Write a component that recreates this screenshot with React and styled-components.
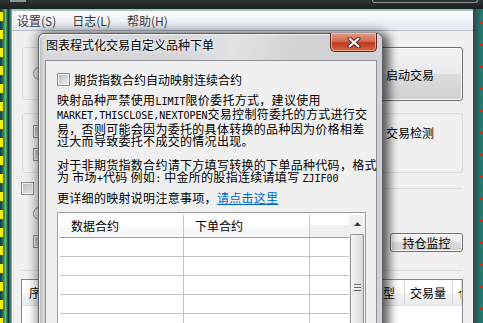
import styled, { createGlobalStyle } from 'styled-components';

const cjk = `"Noto Sans CJK SC", "Microsoft YaHei", sans-serif`;

const GlobalStyle = createGlobalStyle`
  html, body { margin: 0; padding: 0; }
  body {
    width: 483px;
    height: 323px;
    overflow: hidden;
    background: #1f2626;
    font-family: ${cjk};
    font-size: 12px;
    color: #000;
  }
`;

const Screen = styled.div`
  position: relative;
  width: 483px;
  height: 323px;
  overflow: hidden;
  display: flex;
  flex-direction: column;
`;

const TopStrip = styled.div`
  height: 9px;
  flex: none;
  display: flex;
  align-items: flex-start;
  padding-left: 10px;
  background: linear-gradient(#2f3535, #1a1f1f);
`;

const TopLabel = styled.span`
  width: 16px;
  height: 2px;
  background: #b8c0c0;
  opacity: 0.7;
`;

const BehindWindow = styled.span`
  margin-left: auto;
  margin-right: 5px;
  width: 104px;
  height: 2px;
  border: 1px solid #8a9494;
  border-top: none;
  border-radius: 0 0 3px 3px;
`;

const Desk = styled.div`
  flex: 1;
  display: flex;
  min-height: 0;
`;

const LeftStrip = styled.div`
  width: 9px;
  flex: none;
  background:
    repeating-linear-gradient(to bottom, transparent 0 3px, #f4ee10 3px 12px, transparent 12px 18px) left / 3px 100% no-repeat,
    linear-gradient(to right, #0f3c35 0, #2c8a72 45%, #7fc050 60%, #1b5a4d 85%, #0c2a26 100%);
`;

const MainWindow = styled.div`
  flex: 1;
  min-width: 0;
  display: flex;
  flex-direction: column;
  padding: 2px 0 0 3px;
  background: linear-gradient(to right, #24524c, #4d8d86 2px, #9fc2c0 3px);
`;

const MenuBar = styled.div`
  height: 19px;
  flex: none;
  display: flex;
  align-items: center;
  gap: 16px;
  padding-left: 5px;
  background: linear-gradient(#fbfcfe, #e2e7f0);
  border-bottom: 1px solid #b9c0ca;
  color: #3c3c3c;
  line-height: 19px;
`;

const Client = styled.div`
  flex: 1;
  min-width: 0;
  overflow: hidden;
  display: flex;
  flex-direction: column;
  padding: 10px 10px 0 10px;
  background: #f0f0f0;
`;

const RightStrip = styled.div`
  width: 10px;
  flex: none;
  box-sizing: border-box;
  border-left: 2px solid #3a4646;
  background:
    repeating-linear-gradient(to bottom, transparent 0 13px, #d42a1c 13px 15px, transparent 15px 22px) right / 3px 100% no-repeat,
    linear-gradient(to right, #1d5e58, #2a7c73);
`;

const TopRow = styled.div`
  display: flex;
  align-items: flex-start;
`;

const Group = styled.fieldset`
  box-sizing: border-box;
  margin: 0;
  margin-top: ${p => p.$top || '0px'};
  padding: 5px 12px 0 10px;
  height: ${p => p.$h};
  flex: ${p => (p.$grow ? 1 : 'none')};
  border: 1px solid #d5dfe5;
  border-radius: 3px;
  display: flex;
  min-width: 0;
`;

const Legend = styled.legend`
  margin-left: 5px;
  padding: 0 2px;
  line-height: 13px;
`;

const OptionCol = styled.div`
  flex: 1;
  display: flex;
  flex-direction: column;
  gap: ${p => p.$gap || '10px'};
  padding-top: ${p => p.$pad || '0px'};
`;

const Option = styled.label`
  display: flex;
  align-items: center;
  gap: 4px;
  line-height: 13px;
  white-space: nowrap;
`;

const Check = styled.span`
  box-sizing: border-box;
  width: 13px;
  height: 13px;
  flex: none;
  border: 1px solid #8e8f8f;
  background: linear-gradient(135deg, #b4b9bf, #f2f2f2);
  box-shadow: inset 0 0 0 1px #f7f7f7;
`;

const Radio = styled(Check)`
  border-radius: 50%;
  background: radial-gradient(circle at 40% 40%, #f6f6f6, #c3c6ca);
`;

const BigButton = styled.button`
  box-sizing: border-box;
  margin: 6px 0 0 10px;
  width: 106px;
  height: 54px;
  flex: none;
  font: 12px ${cjk};
  color: #000;
  border: 1px solid #707070;
  border-radius: 3px;
  background: linear-gradient(#f2f2f2 0, #ebebeb 50%, #dddddd 50%, #cfcfcf 100%);
  box-shadow: inset 0 0 0 1px #fcfcfc;
`;

const SmallButton = styled(BigButton)`
  margin: 38px 0 0 0;
  width: 73px;
  height: 19px;
  padding: 0;
  line-height: 17px;
`;

const RightOption = styled(Option)`
  width: 81px;
  flex: none;
  align-self: flex-start;
  margin-top: 1px;
`;

const SectionHead = styled.div`
  margin: 9px 1px 0 -1px;
  display: flex;
  align-items: center;
  line-height: 13px;
`;

const Rule = styled.div`
  flex: 1;
  border-top: 1px solid #d5dfe5;
  margin-left: 60px;
`;

const SectionBody = styled.div`
  height: 75px;
  display: flex;
  align-items: flex-start;
  padding-left: 11px;
`;

const Separator = styled.div`
  margin: 0 1px 0 -1px;
  border-top: 1px solid #d5dfe5;
`;

const ListBox = styled.div`
  margin: 8px 0 0 -1px;
  flex: 1;
  border: 1px solid #828790;
  border-bottom: none;
  background: #fff;
  display: flex;
  flex-direction: column;
`;

const ListHead = styled.div`
  display: flex;
  height: 25px;
  border-bottom: 1px solid #e2e3e4;
  background: linear-gradient(#ffffff 50%, #f3f4f5 50%, #eaebec);
`;

const HeadCell = styled.div`
  box-sizing: border-box;
  width: ${p => p.$w};
  flex: ${p => (p.$w ? 'none' : 1)};
  padding-left: ${p => p.$pad || '6px'};
  line-height: 25px;
  border-right: 1px solid #d5d5d5;
  white-space: nowrap;
  overflow: hidden;
`;

/* dialog window */

const Dialog = styled.div`
  position: absolute;
  left: 38px;
  top: 33px;
  width: 345px;
  height: 300px;
  box-sizing: border-box;
  display: flex;
  flex-direction: column;
  padding: 0 5px 0 6px;
  border: 1px solid #5e6266;
  border-bottom: none;
  border-radius: 6px 6px 0 0;
  background:
    linear-gradient(100deg, rgba(255,255,255,0) 35%, rgba(255,255,255,0.35) 50%, rgba(255,255,255,0) 65%),
    linear-gradient(to right, #9c9fa3 0, #c9cbce 2px, #d6d8da 6px, #cfd1d4 100%);
  box-shadow: inset 1px 1px 0 #eef0f2, 0 0 10px 3px rgba(0,0,0,0.35), 7px 2px 10px rgba(0,0,0,0.45);
`;

const TitleBar = styled.div`
  height: 26px;
  flex: none;
  display: flex;
  align-items: flex-start;
  padding-left: 1px;
`;

const Title = styled.div`
  line-height: 21px;
  color: #000;
  text-shadow: 0 0 6px #fff, 0 0 3px #fff;
`;

const CloseButton = styled.div`
  margin-left: auto;
  margin-top: -1px;
  width: 47px;
  height: 19px;
  box-sizing: border-box;
  border: 1px solid #5f2319;
  border-top: none;
  border-radius: 0 0 5px 5px;
  background: linear-gradient(#e49a86 0, #d56a52 45%, #c0391f 55%, #cf6a43 100%);
  box-shadow: inset 0 0 0 1px rgba(255, 210, 190, 0.6);
  display: flex;
  align-items: center;
  justify-content: center;
`;

const DialogClient = styled.div`
  flex: 1;
  background: #f0f0f0;
  border: 1px solid #8c9096;
  border-bottom: none;
  padding: 12px 0 0 11px;
  display: flex;
  flex-direction: column;
`;

const Para = styled.div`
  margin-top: ${p => p.$top};
  line-height: ${p => p.$lh || '12.3px'};
  letter-spacing: 0.3px;
  white-space: nowrap;
`;

const Latin = styled.span`
  font-family: "DejaVu Sans Mono", "Liberation Mono", monospace;
  font-size: 10px;
  letter-spacing: 0;
`;

const Link = styled.a`
  color: #0066cc;
  text-decoration: underline;
`;

const Grid = styled.div`
  margin-top: 8px;
  width: 309px;
  flex: 1;
  box-sizing: border-box;
  border: 1px solid #9a9fa6;
  border-bottom: none;
  padding: 2px 0 0 2px;
  background: #fff;
  display: flex;
`;

const GridBody = styled.div`
  flex: 1;
  display: flex;
  flex-direction: column;
`;

const GridRow = styled.div`
  display: flex;
  height: ${p => p.$head ? '22px' : '18px'};
  flex: none;
  border-bottom: 1px solid ${p => p.$head ? '#a0a0a0' : '#c4c4c4'};
  background: ${p => p.$head ? 'linear-gradient(#ffffff 55%, #f6f7f8 55%)' : '#fff'};
`;

const GridCell = styled.div`
  box-sizing: border-box;
  width: ${p => p.$w};
  flex: ${p => (p.$w ? 'none' : 1)};
  padding-left: 11px;
  line-height: 22px;
  border-right: ${p => p.$sep ? '1px solid #c4c4c4' : 'none'};
  background: ${p => p.$filler ? 'linear-gradient(#ffffff 45%, #eef0f1 45%)' : 'transparent'};
`;

const ScrollBar = styled.div`
  width: 16px;
  flex: none;
  display: flex;
  flex-direction: column;
  background: #f0f0f0;
`;

const ArrowButton = styled.div`
  height: 18px;
  display: flex;
  align-items: center;
  justify-content: center;
`;

const Thumb = styled.div`
  flex: 1;
  margin: 1px 1px 0 1px;
  border: 1px solid #979797;
  border-bottom: none;
  border-radius: 2px 2px 0 0;
  background: linear-gradient(to right, #f3f3f3, #e4e4e4 60%, #d6d6d6);
  display: flex;
  justify-content: center;
  padding-top: 49px;
`;

const Grip = styled.div`
  width: 7px;
  height: 7px;
  background: repeating-linear-gradient(#6a6a6a 0 1px, #f4f4f4 1px 2px, transparent 2px 3px);
`;

const rows = [0, 1, 2, 3, 4];

export default function App() {
  return (
    <>
      <GlobalStyle />
      <Screen>
        <TopStrip>
          <TopLabel />
          <BehindWindow />
        </TopStrip>
        <Desk>
          <LeftStrip />
          <MainWindow>
            <MenuBar>
              <span>设置(S)</span>
              <span>日志(L)</span>
              <span>帮助(H)</span>
            </MenuBar>
            <Client>
              <TopRow>
                <Group $grow $h="59px">
                  <Legend>信</Legend>
                  <OptionCol $pad="8px">
                    <Option><Radio /></Option>
                  </OptionCol>
                </Group>
                <BigButton>启动交易</BigButton>
              </TopRow>

              <Group $top="6px" $h="66px">
                <Legend>运</Legend>
                <OptionCol $gap="10px">
                  <Option><Check /></Option>
                  <Option><Check /></Option>
                </OptionCol>
                <RightOption><Check />交易检测</RightOption>
              </Group>

              <SectionHead>
                <Check />
                <Rule />
              </SectionHead>
              <SectionBody>
                <OptionCol $pad="12px" $gap="15px">
                  <Option><Radio /></Option>
                  <Option><Check /></Option>
                </OptionCol>
                <SmallButton>持仓监控</SmallButton>
              </SectionBody>
              <Separator />

              <ListBox>
                <ListHead>
                  <HeadCell $w="78px" $pad="7px">序号</HeadCell>
                  <HeadCell $w="120px" />
                  <HeadCell $w="60px" />
                  <HeadCell $w="61px" />
                  <HeadCell $w="64px">委托类型</HeadCell>
                  <HeadCell $w="48px" $pad="5px">交易量</HeadCell>
                  <HeadCell $pad="5px">仓位</HeadCell>
                </ListHead>
              </ListBox>
            </Client>
          </MainWindow>
          <RightStrip />
        </Desk>

        <Dialog>
          <TitleBar>
            <Title>图表程式化交易自定义品种下单</Title>
            <CloseButton>
              <svg width="14" height="11" viewBox="0 0 14 11">
                <path d="M2.5 1.5 L11.5 9.5 M11.5 1.5 L2.5 9.5" stroke="#4a2a2a" strokeWidth="4" strokeLinecap="round" />
                <path d="M2.5 1.5 L11.5 9.5 M11.5 1.5 L2.5 9.5" stroke="#ffffff" strokeWidth="2" strokeLinecap="round" />
              </svg>
            </CloseButton>
          </TitleBar>
          <DialogClient>
            <Option><Check />期货指数合约自动映射连续合约</Option>
            <Para $top="8px">
              <div>映射品种严禁使用<Latin>LIMIT</Latin>限价委托方式，建议使用</div>
              <div><Latin>MARKET,THISCLOSE,NEXTOPEN</Latin>交易控制符委托的方式进行交</div>
              <div>易，否则可能会因为委托的具体转换的品种因为价格相差</div>
              <div>过大而导致委托不成交的情况出现。</div>
            </Para>
            <Para $top="12px">
              <div>对于非期货指数合约请下方填写转换的下单品种代码，格式</div>
              <div>为 市场<Latin>+</Latin>代码 例如<Latin>:</Latin> 中金所的股指连续请填写 <Latin>ZJIF00</Latin></div>
            </Para>
            <Para $top="6px" $lh="12px">
              更详细的映射说明注意事项，<Link>请点击这里</Link>
            </Para>
            <Grid>
              <GridBody>
                <GridRow $head>
                  <GridCell $w="124px" $sep>数据合约</GridCell>
                  <GridCell $w="126px" $sep>下单合约</GridCell>
                  <GridCell $filler />
                </GridRow>
                {rows.map(r => (
                  <GridRow key={r}>
                    <GridCell $w="124px" $sep />
                    <GridCell $w="126px" $sep />
                    <GridCell />
                  </GridRow>
                ))}
              </GridBody>
              <ScrollBar>
                <ArrowButton>
                  <svg width="7" height="4" viewBox="0 0 7 4">
                    <path d="M0 4 L3.5 0 L7 4 Z" fill="#3c3c3c" />
                  </svg>
                </ArrowButton>
                <Thumb>
                  <Grip />
                </Thumb>
              </ScrollBar>
            </Grid>
          </DialogClient>
        </Dialog>
      </Screen>
    </>
  );
}
